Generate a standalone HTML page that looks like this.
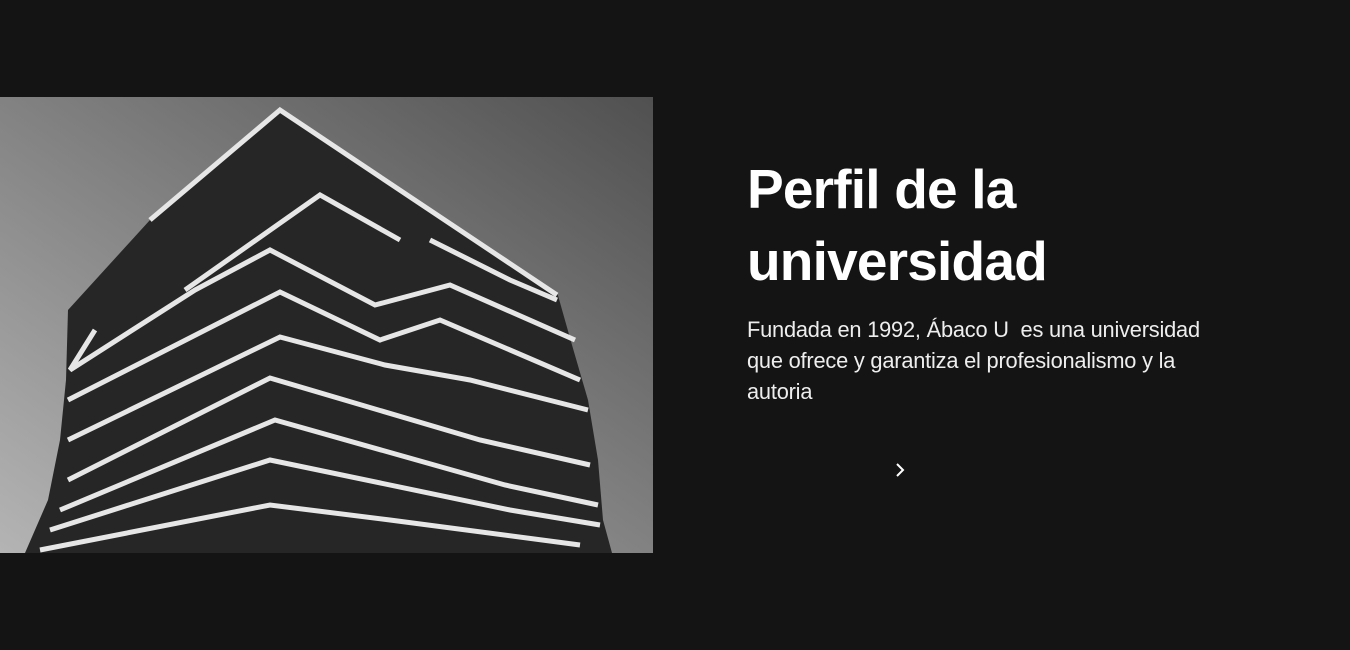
<!DOCTYPE html>
<html><head><meta charset="utf-8"><style>
html,body{margin:0;padding:0;background:#141414;width:1350px;height:650px;overflow:hidden;font-family:"Liberation Sans",sans-serif;color:#fff}
svg.img{position:absolute;left:0;top:97px}
h1{position:absolute;left:747px;top:153px;margin:0;font-size:55px;line-height:72px;font-weight:bold;letter-spacing:-0.8px}
p{position:absolute;left:747px;top:314px;margin:0;font-size:21.8px;line-height:31px;color:#eee;width:475px;letter-spacing:-0.2px}
</style></head><body>
<svg class="img" width="653" height="456" viewBox="0 97 653 456">
<defs><linearGradient id="sky" x1="1" y1="0" x2="0" y2="1"><stop offset="0" stop-color="#505050"/><stop offset="1" stop-color="#b4b4b4"/></linearGradient></defs>
<rect x="0" y="97" width="653" height="456" fill="url(#sky)"/>
<polygon points="280,107 557,292 572,345 588,400 598,460 603,520 612,553 25,553 48,500 60,440 66,380 68,310 150,220" fill="#262626"/>
<g fill="none" stroke="#e6e6e6" stroke-width="5">
<polyline points="150,220 280,110 557,295"/>
<polyline points="185,290 320,195 400,240"/>
<polyline points="95,330 70,370 195,290 270,250 375,305 450,285 575,340"/>
<polyline points="68,400 280,292 380,340 440,320 580,380"/>
<polyline points="68,440 280,337 385,365 470,380 588,410"/>
<polyline points="68,480 270,378 480,440 590,465"/>
<polyline points="60,510 275,420 505,485 598,505"/>
<polyline points="50,530 270,460 510,510 600,525"/>
<polyline points="40,550 270,505 390,520 580,545"/>
<polyline points="430,240 510,280 557,300"/>
</g>
</svg>
<h1>Perfil de la<br>universidad</h1>
<p>Fundada en 1992, Ábaco U &nbsp;es una universidad que ofrece y garantiza el profesionalismo y la autoria</p>
<svg style="position:absolute;left:893px;top:462px" width="14" height="16" viewBox="0 0 14 16"><polyline points="4,2 10,8 4,14" fill="none" stroke="#fff" stroke-width="2"/></svg>
</body></html>
